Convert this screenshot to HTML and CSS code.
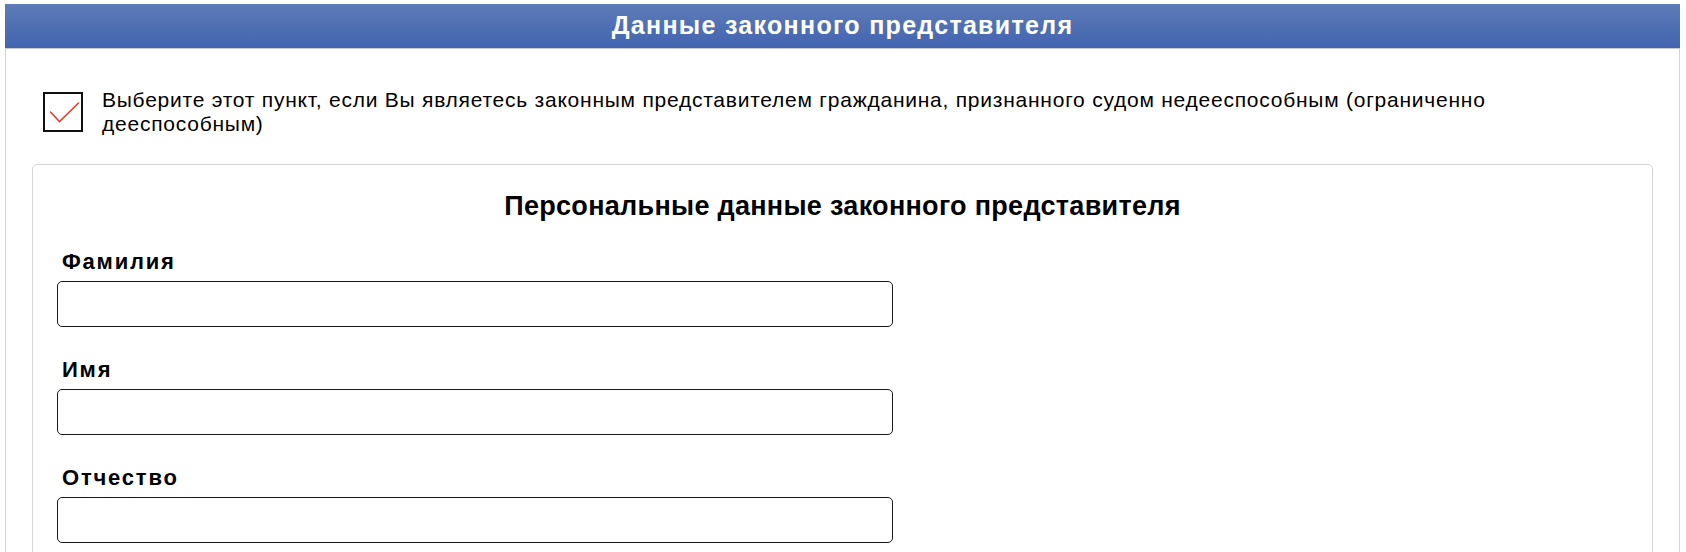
FILE: index.html
```html
<!DOCTYPE html>
<html lang="ru">
<head>
<meta charset="utf-8">
<title>Данные законного представителя</title>
<link rel="stylesheet" href="styles.css">
</head>
<body>
<section class="panel">
  <h2 class="panel-head">Данные законного представителя</h2>
  <div class="panel-body">
    <label class="check-row">
      <span class="check-box">
        <svg width="40" height="40" viewBox="0 0 40 40" aria-hidden="true">
          <polyline points="7.5,20 16.5,29.5 35.5,11" fill="none" stroke="#e5402c" stroke-width="1.6" stroke-linecap="round" stroke-linejoin="miter"/>
        </svg>
      </span>
      <span class="check-text">Выберите этот пункт, если Вы являетесь законным представителем гражданина, признанного судом недееспособным (ограниченно дееспособным)</span>
    </label>
    <div class="card">
      <h3 class="card-title">Персональные данные законного представителя</h3>
      <div class="field">
        <div class="field-label">Фамилия</div>
        <input class="field-input" type="text">
      </div>
      <div class="field">
        <div class="field-label">Имя</div>
        <input class="field-input" type="text">
      </div>
      <div class="field">
        <div class="field-label">Отчество</div>
        <input class="field-input" type="text">
      </div>
    </div>
  </div>
</section>
</body>
</html>
```

FILE: styles.css
```css
html, body {
  margin: 0;
  padding: 0;
  background: #ffffff;
}
body {
  font-family: "Liberation Sans", Arial, sans-serif;
  color: #000;
}
.panel {
  margin: 4px 6px 0 5px;
  border-left: 1px solid #d4d4d4;
  border-right: 1px solid #d4d4d4;
  min-height: 560px;
}
.panel-head {
  margin: 0 -1px;
  box-sizing: border-box;
  height: 45px;
  line-height: 43px;
  text-align: center;
  font-size: 25px;
  letter-spacing: 1.3px;
  font-weight: bold;
  color: #fff;
  background: linear-gradient(to bottom, #5e7cb8 0%, #4264b0 100%);
  border-bottom: 1px solid #c9c9c9;
}
.panel-body {
  padding: 39px 26px 0 26px;
}
.check-row {
  display: flex;
  align-items: center;
  gap: 19px;
  padding-left: 11px;
  padding-right: 140px;
  cursor: pointer;
}
.check-box {
  flex: 0 0 auto;
  width: 40px;
  height: 40px;
  border: 2px solid #111;
  box-sizing: border-box;
  display: block;
  position: relative;
}
.check-box svg {
  position: absolute;
  left: -2px;
  top: -2px;
}
.check-text {
  font-size: 21px;
  line-height: 24px;
  letter-spacing: 0.76px;
}
.card {
  margin-top: 28px;
  border: 1px solid #d6d6d6;
  border-radius: 5px;
  padding: 26px 24px 40px 24px;
  min-height: 500px;
}
.card-title {
  margin: 0 0 29px 0;
  text-align: center;
  font-size: 27px;
  line-height: 30px;
  letter-spacing: 0.3px;
  font-weight: bold;
}
.field {
  margin-bottom: 31px;
}
.field-label {
  font-size: 22px;
  line-height: 24px;
  letter-spacing: 1.8px;
  font-weight: bold;
  padding-left: 5px;
  margin-bottom: 7px;
}
.field-input {
  display: block;
  width: 836px;
  height: 46px;
  box-sizing: border-box;
  border: 1px solid #1a1a1a;
  border-radius: 5px;
  background: #fff;
  font: inherit;
  font-size: 18px;
  padding: 0 10px;
  margin: 0;
}
```
